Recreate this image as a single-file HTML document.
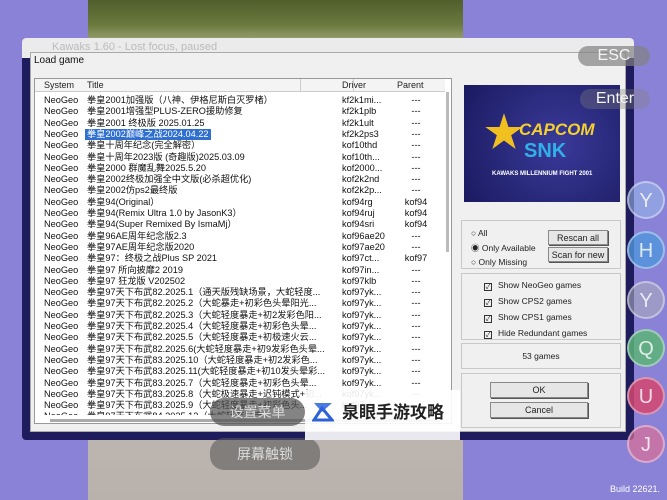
<!DOCTYPE html>
<html><head><meta charset="utf-8"><style>
*{margin:0;padding:0;box-sizing:border-box}
body{width:667px;height:500px;overflow:hidden;background:#8a82d6;font-family:"Liberation Sans","Noto Sans CJK SC",sans-serif;position:relative}
.abs{position:absolute}
.photo{left:88px;top:0;width:375px;height:500px;background:linear-gradient(180deg,#4f5e2c 0%,#6c7a3e 5%,#98a070 8%,#c9c2bc 14%,#c4bdb7 60%,#b9b1ab 100%)}
.win{left:22px;top:38px;width:612px;height:402px;background:#1e1c5c;border-radius:4px}
.wtop{left:22px;top:38px;width:612px;height:20px;background:#ebebeb;color:#bbb;font-size:11px;padding:3px 0 0 30px;border-radius:4px 4px 0 0}
.dlg{left:30px;top:52px;width:596px;height:380px;background:#f0f0f0;border:1px solid #aaa}
.list{left:34px;top:78px;width:418px;height:346px;background:#fff;border:1px solid #999}
.hdr{left:35px;top:79px;width:410px;height:13px;background:#f4f4f4;border-bottom:1px solid #ccc;font-size:9px;color:#222}
.hdr span{position:absolute;top:1px}
.row{position:absolute;left:0;height:11.3px;font-size:9.2px;color:#111;white-space:nowrap;width:410px;line-height:11.3px}
.row span{position:absolute}
.c1{left:9px}.c2{left:52px}.c3{left:307px}.c4{left:356px;width:50px;text-align:center}
.sel{background:#2e6fd0;color:#fff;padding:0 2px;margin-left:-2px}
.grp{border:1px solid #c8c8c8;background:#f0f0f0}
.btn{border:1px solid #888;background:#e6e6e6;font-size:9px;text-align:center;color:#222;box-shadow:1px 1px 0 #555}
.cb{font-size:8.5px;color:#222;position:absolute;left:22px}
.cb i{display:inline-block;width:8px;height:8px;border:1px solid #333;margin-right:6px;font-style:normal;font-size:7px;line-height:7px;text-align:center;vertical-align:-1px}
.circ{width:38px;height:38px;border-radius:50%;left:627px;color:rgba(255,255,255,.8);font-size:20px;text-align:center;line-height:36px;border:2px solid rgba(255,255,255,.4)}
.pill{background:rgba(90,90,90,.6);color:#ddd;border-radius:14px;text-align:center}
</style></head><body>
<div class="abs photo"></div>
<div class="abs win"></div>
<div class="abs wtop">Kawaks 1.60 - Lost focus, paused</div>
<div class="abs dlg"></div>
<div class="abs" style="left:34px;top:55px;font-size:10px;color:#111">Load game</div>
<div class="abs list"></div>
<div class="abs hdr"><span style="left:9px">System</span><span style="left:52px">Title</span><span style="left:307px">Driver</span><span style="left:362px">Parent</span></div>
<div class="abs" style="left:300px;top:79px;width:1px;height:13px;background:#ccc"></div>
<div class="abs" style="left:353px;top:79px;width:1px;height:13px;background:#ccc"></div>
<div class="abs" style="left:446px;top:92px;width:3px;height:160px;background:#bbb"></div>
<div class="abs" id="rows" style="left:35px;top:95px;width:410px;height:320px;overflow:hidden">
<div class="row" style="top:0"><span class="c1">NeoGeo</span><span class="c2">拳皇2001加强版（八神、伊格尼斯白灭罗楮）</span><span class="c3">kf2k1mi...</span><span class="c4">---</span></div>
<div class="row" style="top:11.3px"><span class="c1">NeoGeo</span><span class="c2">拳皇2001增强型PLUS-ZERO援助修复</span><span class="c3">kf2k1plb</span><span class="c4">---</span></div>
<div class="row" style="top:22.6px"><span class="c1">NeoGeo</span><span class="c2">拳皇2001 终极版 2025.01.25</span><span class="c3">kf2k1ult</span><span class="c4">---</span></div>
<div class="row" style="top:33.9px"><span class="c1">NeoGeo</span><span class="c2 sel">拳皇2002巅峰之战2024.04.22</span><span class="c3">kf2k2ps3</span><span class="c4">---</span></div>
<div class="row" style="top:45.2px"><span class="c1">NeoGeo</span><span class="c2">拳皇十周年纪念(完全解密）</span><span class="c3">kof10thd</span><span class="c4">---</span></div>
<div class="row" style="top:56.5px"><span class="c1">NeoGeo</span><span class="c2">拳皇十周年2023版 (奇趣版)2025.03.09</span><span class="c3">kof10th...</span><span class="c4">---</span></div>
<div class="row" style="top:67.8px"><span class="c1">NeoGeo</span><span class="c2">拳皇2000 群魔乱舞2025.5.20</span><span class="c3">kof2000...</span><span class="c4">---</span></div>
<div class="row" style="top:79.1px"><span class="c1">NeoGeo</span><span class="c2">拳皇2002终极加强全中文版(必杀超优化)</span><span class="c3">kof2k2nd</span><span class="c4">---</span></div>
<div class="row" style="top:90.4px"><span class="c1">NeoGeo</span><span class="c2">拳皇2002仿ps2最终版</span><span class="c3">kof2k2p...</span><span class="c4">---</span></div>
<div class="row" style="top:101.7px"><span class="c1">NeoGeo</span><span class="c2">拳皇94(Original）</span><span class="c3">kof94rg</span><span class="c4">kof94</span></div>
<div class="row" style="top:113px"><span class="c1">NeoGeo</span><span class="c2">拳皇94(Remix Ultra 1.0 by JasonK3）</span><span class="c3">kof94ruj</span><span class="c4">kof94</span></div>
<div class="row" style="top:124.3px"><span class="c1">NeoGeo</span><span class="c2">拳皇94(Super Remixed By IsmaMj）</span><span class="c3">kof94sri</span><span class="c4">kof94</span></div>
<div class="row" style="top:135.6px"><span class="c1">NeoGeo</span><span class="c2">拳皇96AE周年纪念版2.3</span><span class="c3">kof96ae20</span><span class="c4">---</span></div>
<div class="row" style="top:146.9px"><span class="c1">NeoGeo</span><span class="c2">拳皇97AE周年纪念版2020</span><span class="c3">kof97ae20</span><span class="c4">---</span></div>
<div class="row" style="top:158.2px"><span class="c1">NeoGeo</span><span class="c2">拳皇97：终极之战Plus SP 2021</span><span class="c3">kof97ct...</span><span class="c4">kof97</span></div>
<div class="row" style="top:169.5px"><span class="c1">NeoGeo</span><span class="c2">拳皇97 所向披靡2 2019</span><span class="c3">kof97in...</span><span class="c4">---</span></div>
<div class="row" style="top:180.8px"><span class="c1">NeoGeo</span><span class="c2">拳皇97 狂龙版 V202502</span><span class="c3">kof97klb</span><span class="c4">---</span></div>
<div class="row" style="top:192.1px"><span class="c1">NeoGeo</span><span class="c2">拳皇97天下布武82.2025.1（通天版残缺场景，大蛇轻度...</span><span class="c3">kof97yk...</span><span class="c4">---</span></div>
<div class="row" style="top:203.4px"><span class="c1">NeoGeo</span><span class="c2">拳皇97天下布武82.2025.2（大蛇暴走+初彩色头晕阳光...</span><span class="c3">kof97yk...</span><span class="c4">---</span></div>
<div class="row" style="top:214.7px"><span class="c1">NeoGeo</span><span class="c2">拳皇97天下布武82.2025.3（大蛇轻度暴走+初2发彩色阳...</span><span class="c3">kof97yk...</span><span class="c4">---</span></div>
<div class="row" style="top:226px"><span class="c1">NeoGeo</span><span class="c2">拳皇97天下布武82.2025.4（大蛇轻度暴走+初彩色头晕...</span><span class="c3">kof97yk...</span><span class="c4">---</span></div>
<div class="row" style="top:237.3px"><span class="c1">NeoGeo</span><span class="c2">拳皇97天下布武82.2025.5（大蛇轻度暴走+初极速火云...</span><span class="c3">kof97yk...</span><span class="c4">---</span></div>
<div class="row" style="top:248.6px"><span class="c1">NeoGeo</span><span class="c2">拳皇97天下布武82.2025.6(大蛇轻度暴走+初9发彩色头晕...</span><span class="c3">kof97yk...</span><span class="c4">---</span></div>
<div class="row" style="top:259.9px"><span class="c1">NeoGeo</span><span class="c2">拳皇97天下布武83.2025.10（大蛇轻度暴走+初2发彩色...</span><span class="c3">kof97yk...</span><span class="c4">---</span></div>
<div class="row" style="top:271.2px"><span class="c1">NeoGeo</span><span class="c2">拳皇97天下布武83.2025.11(大蛇轻度暴走+初10发头晕彩...</span><span class="c3">kof97yk...</span><span class="c4">---</span></div>
<div class="row" style="top:282.5px"><span class="c1">NeoGeo</span><span class="c2">拳皇97天下布武83.2025.7（大蛇轻度暴走+初彩色头晕...</span><span class="c3">kof97yk...</span><span class="c4">---</span></div>
<div class="row" style="top:293.8px"><span class="c1">NeoGeo</span><span class="c2">拳皇97天下布武83.2025.8（大蛇极速暴走+迟钝模式+初...</span><span class="c3">kof97yk...</span><span class="c4">---</span></div>
<div class="row" style="top:305.1px"><span class="c1">NeoGeo</span><span class="c2">拳皇97天下布武83.2025.9（大蛇轻度暴走+初彩色头...</span><span class="c3">kof97yk...</span><span class="c4">---</span></div>
<div class="row" style="top:316.4px"><span class="c1">NeoGeo</span><span class="c2">拳皇97天下布武84.2025.12（大蛇轻度暴走...</span><span class="c3">kof97yk...</span><span class="c4">---</span></div>
</div>
<div class="abs" style="left:50px;top:419px;width:390px;height:3px;background:#aaa"></div>

<div class="abs" style="left:464px;top:85px;width:156px;height:117px;background:radial-gradient(circle at 60% 50%,#3a3a9a,#1a1a60)">
<div class="abs" style="left:20px;top:15px;font-size:40px;color:#f0c020">★</div>
<div class="abs" style="left:55px;top:35px;font-size:17px;font-weight:bold;color:#f4d030;font-style:italic">CAPCOM</div>
<div class="abs" style="left:60px;top:55px;font-size:20px;font-weight:bold;color:#30b0e8">SNK</div>
<div class="abs" style="left:28px;top:86px;font-size:6px;color:#fff;font-weight:bold">KAWAKS MILLENNIUM FIGHT 2001</div>
</div>

<div class="abs grp" style="left:461px;top:220px;width:160px;height:49px"></div>
<div class="abs" style="left:471px;top:226px;font-size:8.5px;color:#222;line-height:14.5px">○ All<br>◉ Only Available<br>○ Only Missing</div>
<div class="abs btn" style="left:548px;top:230px;width:60px;height:15px;line-height:14px">Rescan all</div>
<div class="abs btn" style="left:548px;top:247px;width:60px;height:15px;line-height:14px">Scan for new</div>

<div class="abs grp" style="left:461px;top:273px;width:160px;height:67px">
<div class="cb" style="top:6px"><i>✓</i>Show NeoGeo games</div>
<div class="cb" style="top:22px"><i>✓</i>Show CPS2 games</div>
<div class="cb" style="top:38px"><i>✓</i>Show CPS1 games</div>
<div class="cb" style="top:54px"><i>✓</i>Hide Redundant games</div>
</div>
<div class="abs grp" style="left:461px;top:343px;width:160px;height:26px;font-size:8.5px;text-align:center;line-height:25px;color:#222">53 games</div>
<div class="abs grp" style="left:461px;top:373px;width:160px;height:55px"></div>
<div class="abs btn" style="left:490px;top:382px;width:98px;height:16px;line-height:15px">OK</div>
<div class="abs btn" style="left:490px;top:402px;width:98px;height:16px;line-height:15px">Cancel</div>

<div class="abs pill" style="left:578px;top:46px;width:72px;height:20px;font-size:16px;line-height:20px;background:rgba(130,130,130,.7);color:#f4f4f4">ESC</div>
<div class="abs pill" style="left:580px;top:89px;width:70px;height:20px;font-size:16px;line-height:20px;background:rgba(130,130,130,.35);color:#f4f4f4">Enter</div>

<div class="abs circ" style="top:181px;background:rgba(150,180,230,.6)">Y</div>
<div class="abs circ" style="top:231px;background:rgba(80,150,220,.8)">H</div>
<div class="abs circ" style="top:281px;background:rgba(170,170,190,.6)">Y</div>
<div class="abs circ" style="top:329px;background:rgba(90,180,120,.85)">Q</div>
<div class="abs circ" style="top:377px;background:rgba(210,70,110,.85)">U</div>
<div class="abs circ" style="top:425px;background:rgba(220,110,150,.7)">J</div>

<div class="abs pill" style="left:210px;top:398px;width:95px;height:28px;font-size:14px;line-height:28px;background:rgba(80,80,80,.7)">设置菜单</div>
<div class="abs pill" style="left:210px;top:438px;width:110px;height:32px;font-size:14px;line-height:32px">屏幕触锁</div>
<div class="abs" style="left:305px;top:390px;width:155px;height:50px;background:rgba(255,255,255,.9)"></div>
<svg class="abs" style="left:312px;top:400px" width="22" height="22"><path d="M2 3H20L10 12Z" fill="#4a7be0"/><path d="M10 8L20 20H2Z" fill="none" stroke="#2f62d8" stroke-width="3"/></svg>
<div class="abs" style="left:342px;top:398px;font-size:17px;font-weight:bold;color:#222">泉眼手游攻略</div>
<div class="abs" style="left:610px;top:484px;font-size:9px;color:#fff">Build 22621.</div>
</body></html>
